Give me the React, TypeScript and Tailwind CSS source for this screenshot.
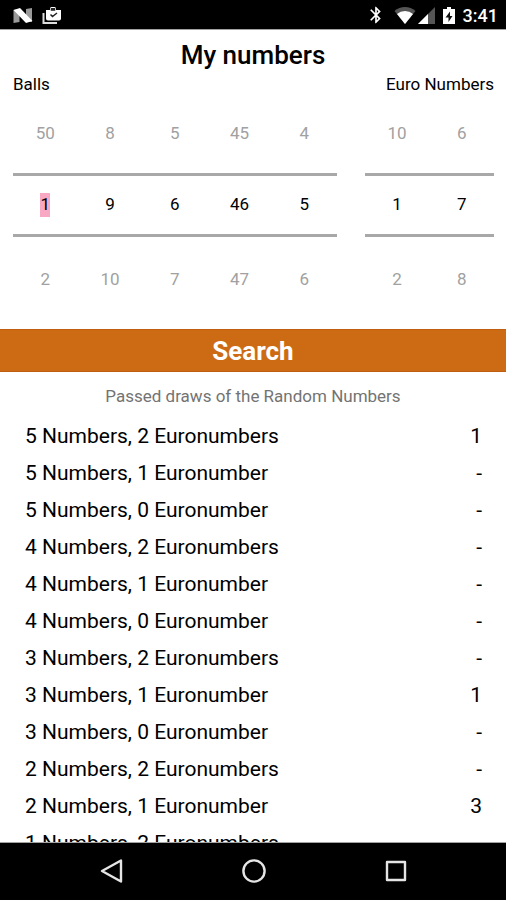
import { useState } from "react";
import { MdBluetooth } from "react-icons/md";

type Wheel = { label: string; previous: number; current: number; next: number };

const balls: Wheel[] = [
  { label: "Ball 1", previous: 50, current: 1, next: 2 },
  { label: "Ball 2", previous: 8, current: 9, next: 10 },
  { label: "Ball 3", previous: 5, current: 6, next: 7 },
  { label: "Ball 4", previous: 45, current: 46, next: 47 },
  { label: "Ball 5", previous: 4, current: 5, next: 6 },
];

const euroNumbers: Wheel[] = [
  { label: "Euro number 1", previous: 10, current: 1, next: 2 },
  { label: "Euro number 2", previous: 6, current: 7, next: 8 },
];

const draws: [string, string][] = [
  ["5 Numbers, 2 Euronumbers", "1"],
  ["5 Numbers, 1 Euronumber", "-"],
  ["5 Numbers, 0 Euronumber", "-"],
  ["4 Numbers, 2 Euronumbers", "-"],
  ["4 Numbers, 1 Euronumber", "-"],
  ["4 Numbers, 0 Euronumber", "-"],
  ["3 Numbers, 2 Euronumbers", "-"],
  ["3 Numbers, 1 Euronumber", "1"],
  ["3 Numbers, 0 Euronumber", "-"],
  ["2 Numbers, 2 Euronumbers", "-"],
  ["2 Numbers, 1 Euronumber", "3"],
  ["1 Numbers, 2 Euronumbers", ""],
];

function StatusBar() {
  return (
    <header className="flex h-[30px] shrink-0 items-center justify-between border-b border-neutral-400 bg-black pr-2 pl-3 text-white">
      <div className="flex items-center gap-2">
        <svg className="h-5 w-[22px]" viewBox="0 0 22 20" aria-hidden="true">
          <path d="M1.500 5l6-1v13l-6 1zM14 4l6-1v14l-6-1z" fill="#9a9a9a" />
          <path d="M1.500 5L8 3l12.500 13L14 18z" fill="#fff" />
        </svg>
        <svg className="h-5 w-5" viewBox="0 0 20 20" aria-hidden="true">
          <path d="M1.500 8v10h13.500" fill="none" stroke="#ddd" strokeWidth="2" />
          <path d="M4 5h4V3.500A1.500 1.500 0 0 1 9.500 2h3A1.500 1.500 0 0 1 14 3.500V5h5v8.500a2 2 0 0 1-2 2H6a2 2 0 0 1-2-2z" fill="#fff" />
          <path d="M9.500 5V3.700h3V5zM8.500 9.500l2 2L15 8" fill="none" stroke="#222" strokeWidth="1.500" />
        </svg>
      </div>
      <div className="flex items-center">
        <MdBluetooth className="mr-2 size-5" aria-hidden="true" />
        <svg className="mr-px h-5 w-[22px]" viewBox="0 0 22 20" aria-hidden="true">
          <path d="M11 19L.5 6a16 16 0 0 1 21 0z" fill="#555" />
          <path d="M11 19L3 9a12 12 0 0 1 16 0z" fill="#fff" />
        </svg>
        <svg className="mr-2 h-5 w-[18px]" viewBox="0 0 18 20" aria-hidden="true">
          <path d="M18 2v17H1z" fill="#555" />
          <path d="M11 9v10H1z" fill="#fff" />
        </svg>
        <svg className="mr-2 h-5 w-3" viewBox="0 0 12 20" aria-hidden="true">
          <path d="M4 2h4v2h4v15H0V4h4z" fill="#fff" />
          <path d="M7 6.500L2.500 12.500H5.500V17L9.500 11H7z" fill="#111" />
        </svg>
        <span className="pt-0.5 text-lg leading-6 font-medium">3:41</span>
      </div>
    </header>
  );
}

function Picker({ wheels, className, active }: { wheels: Wheel[]; className: string; active?: string }) {
  const [values, setValues] = useState(wheels.map((w) => String(w.current)));
  return (
    <div className={className}>
      <div className="flex h-[78px]">
        {wheels.map((w) => (
          <button key={w.label} aria-label={`${w.label}: ${w.previous}`} className="min-w-0 flex-1 text-neutral-400">
            {w.previous}
          </button>
        ))}
      </div>
      <div className="flex h-16 items-center border-y-[3px] border-[#a8a8a8]">
        {wheels.map((w, i) => (
          <div key={w.label} className="flex min-w-0 flex-1 justify-center">
            <input
              aria-label={w.label}
              inputMode="numeric"
              value={values[i]}
              onChange={(e) => setValues(values.map((v, j) => (j === i ? e.target.value : v)))}
              className={
                w.label === active
                  ? "h-6 w-[10px] bg-[#f9a8c3] text-center outline-none"
                  : "h-6 w-10 bg-transparent text-center outline-none"
              }
            />
          </div>
        ))}
      </div>
      <div className="flex h-[86px]">
        {wheels.map((w) => (
          <button key={w.label} aria-label={`${w.label}: ${w.next}`} className="min-w-0 flex-1 text-neutral-400">
            {w.next}
          </button>
        ))}
      </div>
    </div>
  );
}

function NavigationBar() {
  return (
    <nav className="flex h-[58px] shrink-0 items-center justify-center gap-[118px] border-t border-neutral-400 bg-black pb-0.5 pl-px text-neutral-200">
      <button aria-label="Back">
        <svg className="size-6" viewBox="0 0 24 24" fill="none" stroke="currentColor" strokeWidth="2.400" strokeLinejoin="round">
          <path d="M21 1.500v21L2 12z" />
        </svg>
      </button>
      <button aria-label="Home">
        <svg className="size-6" viewBox="0 0 24 24" fill="none" stroke="currentColor" strokeWidth="2.400">
          <circle cx="12" cy="12" r="10.600" />
        </svg>
      </button>
      <button aria-label="Recent apps">
        <svg className="size-6" viewBox="0 0 24 24" fill="none" stroke="currentColor" strokeWidth="2.400" strokeLinejoin="round">
          <path d="M3 3h18v18H3z" />
        </svg>
      </button>
    </nav>
  );
}

export default function App() {
  return (
    <div className="flex h-screen flex-col overflow-hidden bg-white font-[Roboto,sans-serif] text-[17px] text-black">
      <StatusBar />
      <main className="min-h-0 flex-1 overflow-hidden">
        <h1 className="pt-[7px] text-center text-[26px] leading-9 font-medium">My numbers</h1>
        <div className="flex justify-between pr-3 pl-[13px] leading-[22px]">
          <h2>Balls</h2>
          <h2>Euro Numbers</h2>
        </div>
        <div className="flex gap-7 pr-3 pb-[6px] pl-[13px]">
          <Picker wheels={balls} active="Ball 1" className="min-w-0 flex-[5]" />
          <Picker wheels={euroNumbers} className="min-w-0 flex-[2]" />
        </div>
        <button className="h-[43px] w-full border-y border-[#bf5d10] bg-[#cd6b14] pt-0.5 text-[26px] font-bold text-white">
          Search
        </button>
        <table className="w-full text-[21px] leading-[37px]">
          <caption className="pt-3 pb-[10px] text-[17px] leading-6 text-neutral-500">Passed draws of the Random Numbers</caption>
          <tbody>
            {draws.map(([name, count]) => (
              <tr key={name}>
                <th scope="row" className="p-0 pl-[25px] text-left font-normal">{name}</th>
                <td className="p-0 pr-6 text-right">{count}</td>
              </tr>
            ))}
          </tbody>
        </table>
      </main>
      <NavigationBar />
    </div>
  );
}
